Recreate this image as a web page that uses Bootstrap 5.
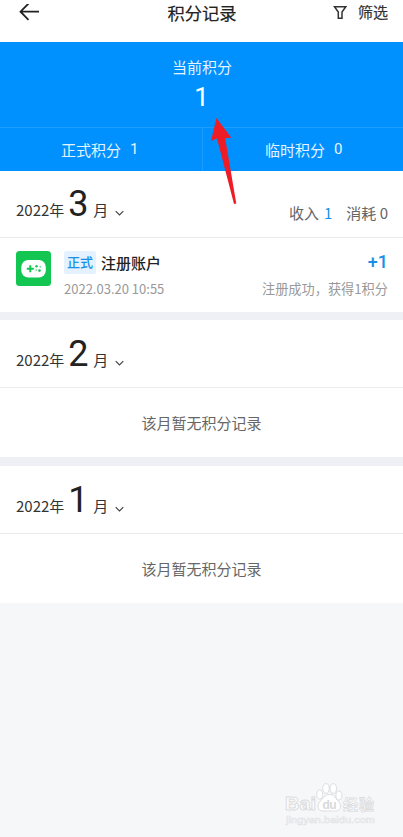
<!DOCTYPE html>
<html lang="zh-CN">
<head>
<meta charset="utf-8">
<meta name="viewport" content="width=device-width, initial-scale=1">
<title>积分记录</title>
<link href="https://cdn.jsdelivr.net/npm/bootstrap@5.3.0/dist/css/bootstrap.min.css" rel="stylesheet">
<style>
body{font-family:"Noto Sans CJK SC",sans-serif;font-size:15px;line-height:22px;background:#f6f7f9;color:#333;min-height:837px;overflow:hidden}
svg{display:block;flex:none}
.topbar{height:42px;padding:0 15px 0 19px}
.topbar .heading{font-size:17.3px;line-height:26px;font-weight:400;color:#222;-webkit-text-stroke:.2px #222;margin-right:3px}
.topbar .side{width:60px}
.filter{line-height:24px;-webkit-text-stroke:.2px #333}
.summary{background:#0091ff;color:#e6f4ff}
.total{height:85px;padding-top:14px}
.total-label{padding-left:1px}
.total-num{font-family:Roboto,sans-serif;font-size:26px;line-height:30px;margin-top:4px;color:#fff}
.split{height:44px;border-top:1px solid #1c9dff}
.split>div+div{border-left:1px solid #1c9dff}
.split>div:first-child{padding-right:2px}
.split>div+div{padding-left:2px}
.latin{font-family:Roboto,sans-serif;margin-left:9px;margin-top:-2px}
.month{height:67px;padding:0 15px 0 16px;border-bottom:1px solid #ececee}
.month.tall{height:68px}
.month-name{padding-top:11px}
.tall .month-name{padding-top:12px}
.month-num{font-family:Roboto,sans-serif;font-size:36px;line-height:44px;width:20px;margin:0 5px 0 4px;color:#222}
.chev{margin:0 0 0 7px}
.stats{color:#666;padding-top:31px}
.stats .blue{margin:0 14px 0 5px}
.blue{color:#1890e8}
.record{height:74px;padding:13px 15px 0 16px}
.rec-body{margin-left:13px}
.tag{background:#e3f2fe;color:#1890e8;font-size:13px;font-weight:500;line-height:22px;width:32px;margin-right:5px;border-radius:2px}
.rec-title{font-weight:500;color:#222;line-height:23px}
.muted{color:#999;font-size:13.2px;line-height:20px;margin-top:5px}
.muted .date{font-size:13px}
.plus{font-family:Roboto,sans-serif;font-size:18px;font-weight:500;line-height:22px}
.gapbar{height:8px;background:#eff0f6}
.gapbar.wide{height:9px}
.empty{height:69px;color:#666;padding-top:1px}
.arrow{position:absolute;left:208px;top:116px}
.logo{position:absolute;left:280px;top:776px}
</style>
</head>
<body class="position-relative">
<header class="topbar bg-white d-flex justify-content-between align-items-start">
  <div class="side pt-1"><svg width="21" height="18" viewBox="0 0 21 18" fill="none" stroke="#222" stroke-width="1.8"><path d="M9.500-.5 1.500 7.700l8 8.200M1.500 7.700H20"/></svg></div>
  <div class="heading">积分记录</div>
  <div class="side d-flex justify-content-end filter"><svg class="me-2" width="18" height="20" viewBox="0 0 18 20" fill="none" stroke="#333" stroke-width="1.5"><path d="M2.500 6.700h11.300L10 12v6.200H6.300V12z"/></svg><span class="text-nowrap">筛选</span></div>
</header>
<section class="summary text-center">
  <div class="total"><div class="total-label">当前积分</div><div class="total-num">1</div></div>
  <div class="split row g-0">
    <div class="col-6 d-flex justify-content-center align-items-center"><span>正式积分</span><span class="latin">1</span></div>
    <div class="col-6 d-flex justify-content-center align-items-center"><span>临时积分</span><span class="latin">0</span></div>
  </div>
</section>
<section class="bg-white">
  <div class="month d-flex justify-content-between align-items-start">
    <div class="month-name d-flex align-items-baseline"><span>2022年</span><span class="month-num">3</span><span>月</span><svg class="chev" width="9" height="6" viewBox="0 0 9 6" fill="none" stroke="#444" stroke-width="1.2"><path d="m.7 1.200 3.800 3.800L8.300 1.200"/></svg></div>
    <div class="stats d-flex"><span>收入</span><span class="blue">1</span><span>消耗 0</span></div>
  </div>
  <div class="record d-flex">
    <svg width="35" height="35" viewBox="0 0 35 35"><rect width="35" height="35" rx="3.500" fill="#13c551"/><rect x="5.300" y="9" width="24.500" height="17.500" rx="7" fill="#fff"/><path d="M14.300 14.300v7M10.800 17.800h7" stroke="#13c551" stroke-width="2"/><g fill="#13c551"><circle cx="20.500" cy="15.200" r="1.200"/><circle cx="24.200" cy="15.800" r=".7"/><circle cx="20.200" cy="19" r=".7"/><circle cx="23.500" cy="19.600" r="1.300"/></g></svg>
    <div class="flex-grow-1 rec-body">
      <div class="d-flex justify-content-between"><div class="d-flex"><span class="tag text-center">正式</span><span class="rec-title">注册账户</span></div><span class="plus blue">+1</span></div>
      <div class="d-flex justify-content-between muted"><span class="date">2022.03.20 10:55</span><span>注册成功，获得1积分</span></div>
    </div>
  </div>
</section>
<div class="gapbar"></div>
<section class="bg-white">
  <div class="month tall"><div class="month-name d-flex align-items-baseline"><span>2022年</span><span class="month-num">2</span><span>月</span><svg class="chev" width="9" height="6" viewBox="0 0 9 6" fill="none" stroke="#444" stroke-width="1.2"><path d="m.7 1.200 3.800 3.800L8.300 1.200"/></svg></div></div>
  <div class="empty d-flex justify-content-center align-items-center">该月暂无积分记录</div>
</section>
<div class="gapbar wide"></div>
<section class="bg-white">
  <div class="month tall"><div class="month-name d-flex align-items-baseline"><span>2022年</span><span class="month-num">1</span><span>月</span><svg class="chev" width="9" height="6" viewBox="0 0 9 6" fill="none" stroke="#444" stroke-width="1.2"><path d="m.7 1.200 3.800 3.800L8.300 1.200"/></svg></div></div>
  <div class="empty d-flex justify-content-center align-items-center">该月暂无积分记录</div>
</section>
<svg class="arrow" width="32" height="90" viewBox="0 0 32 90"><path d="M8.500 2 23.300 21.800l-6.200.2L28.300 87.500l-2.300.6L9 22.500 3 25z" fill="#ee1c25"/></svg>
<svg class="logo" width="105" height="52" viewBox="0 0 105 52">
  <g fill="#fff" stroke="#dcdde0" stroke-width="1">
    <text x="5" y="34" font-family="Liberation Sans,sans-serif" font-size="19" font-weight="700" textLength="31" lengthAdjust="spacingAndGlyphs">Bai</text>
    <ellipse cx="39.700" cy="18.500" rx="3" ry="4.500"/><ellipse cx="46" cy="12.500" rx="3.200" ry="4.800"/><ellipse cx="53.300" cy="12.500" rx="3.200" ry="4.800"/><ellipse cx="58.900" cy="19.500" rx="3" ry="4.500"/>
    <path d="M49.500 18.500c5 0 6 4 9 7s3 9.500-3 9.500H43c-6 0-6-6.500-3-9.500s4.500-7 9.500-7z"/>
    <text x="63" y="34" font-family="Noto Sans CJK SC,sans-serif" font-size="15" font-weight="700" textLength="31" stroke-width=".8">经验</text>
  </g>
  <text x="42.500" y="33" font-family="Liberation Sans,sans-serif" font-size="12" font-weight="700" fill="#d8d9db" textLength="14">du</text>
  <text x="6" y="46.500" font-family="Liberation Sans,sans-serif" font-size="9.500" fill="#fff" stroke="#e2e3e6" stroke-width=".6" textLength="89" lengthAdjust="spacingAndGlyphs">jingyan.baidu.com</text>
</svg>
<script src="https://cdn.jsdelivr.net/npm/bootstrap@5.3.0/dist/js/bootstrap.bundle.min.js"></script>
</body>
</html>
